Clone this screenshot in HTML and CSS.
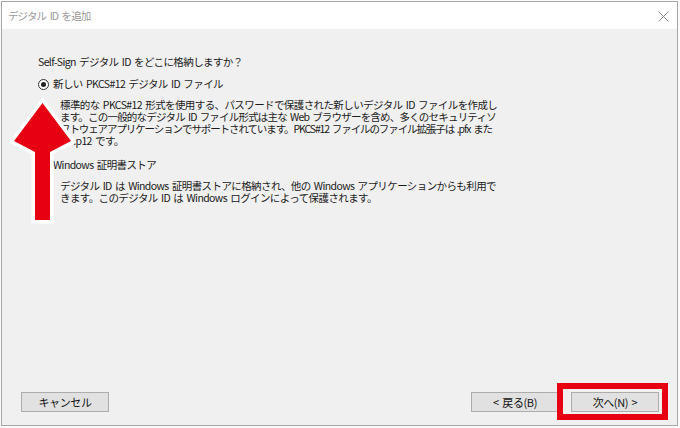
FILE: index.html
```html
<!DOCTYPE html>
<html lang="ja">
<head>
  <meta charset="UTF-8" />
  <title>デジタル ID を追加</title>
  <link rel="stylesheet" href="styles.css">
</head>
<body>

  <div class="dialog">
    <div class="titlebar">
      <span class="title">デジタル ID を追加</span>
      <span class="close">
        <svg width="11" height="11" viewBox="0 0 11 11">
          <path d="M0.5 0.5 L10.5 10.5 M10.5 0.5 L0.5 10.5" stroke="#8a8a8a" stroke-width="1" fill="none"/>
        </svg>
      </span>
    </div>

    <div class="content">
      <div class="question">Self-Sign デジタル ID をどこに格納しますか？</div>

      <label class="option">
        <span class="radio checked"></span>
        <span>新しい PKCS#12 デジタル ID ファイル</span>
      </label>
      <div class="desc">
        <div>標準的な PKCS#12 形式を使用する、パスワードで保護された新しいデジタル ID ファイルを作成し</div>
        <div class="kana">ます。この一般的なデジタル ID ファイル形式は主な Web ブラウザーを含め、多くのセキュリティソ</div>
        <div class="kana-more">フトウェアアプリケーションでサポートされています。PKCS#12 ファイルのファイル拡張子は .pfx また</div>
        <div>は .p12 です。</div>
      </div>

      <label class="option second">
        <span class="radio"></span>
        <span>Windows 証明書ストア</span>
      </label>
      <div class="desc">
        <div>デジタル ID は Windows 証明書ストアに格納され、他の Windows アプリケーションからも利用で</div>
        <div>きます。このデジタル ID は Windows ログインによって保護されます。</div>
      </div>
    </div>

    <div class="footer">
      <button class="btn">キャンセル</button>
      <div class="nav">
        <button class="btn">&lt; 戻る(B)</button>
        <button class="btn">次へ(N) &gt;</button>
      </div>
    </div>
  </div>

  <!-- annotations drawn over the dialog -->
  <svg class="arrow" width="90" height="140" viewBox="0 90 90 140">
    <polygon points="42.5,103 71,141 50,152 50,220 35,220 35,152 14,141"
             fill="#e60012" stroke="#ffffff" stroke-width="7"
             stroke-linejoin="miter" paint-order="stroke"/>
  </svg>
  <div class="highlight"></div>

</body>
</html>
```

FILE: styles.css
```css
:root {
  --face: #f0f0f0;
  --text: #1b1b1b;
  --btn-bg: #e1e1e1;
  --btn-border: #adadad;
  --mark: #e60012;
}

* {
  box-sizing: border-box;
}

body {
  margin: 0;
  width: 680px;
  height: 428px;
  background: #fbfbfb;
  font-family: "Noto Sans CJK JP", "Noto Sans", sans-serif;
  font-size: 10.5px;
  color: var(--text);
  position: relative;
  overflow: hidden;
}

.dialog {
  margin: 1px 0 0 1px;
  width: 677px;
  height: 425px;
  border: 1px solid #a6a6a6;
  background: var(--face);
  display: flex;
  flex-direction: column;
}

.titlebar {
  height: 27px;
  background: #fff;
  display: flex;
  align-items: center;
  justify-content: space-between;
  padding: 0 8px 0 6px;
}

.titlebar .title {
  color: #9a9a9a;
  font-size: 10.5px;
  letter-spacing: -0.9px;
  word-spacing: 2px;
}

.titlebar .close {
  display: flex;
  margin-top: 1px;
}

.content {
  flex: 1;
  padding: 27px 0 0 36px;
  line-height: 12px;
  letter-spacing: -0.6px;
  word-spacing: 1.5px;
  white-space: nowrap;
}

.question,
.desc div {
  height: 12px;
}

.desc .kana {
  letter-spacing: -0.8px;
}

.desc .kana-more {
  letter-spacing: -1.1px;
}

.option {
  display: flex;
  align-items: center;
  gap: 4px;
  margin-top: 10px;
  height: 12px;
}

.option.second {
  margin-top: 12px;
}

.radio {
  width: 11px;
  height: 11px;
  border: 1px solid #333;
  border-radius: 50%;
  background: #fff;
  display: flex;
  align-items: center;
  justify-content: center;
}

.radio.checked::after {
  content: "";
  width: 5px;
  height: 5px;
  border-radius: 50%;
  background: #222;
}

.desc {
  margin: 9px 0 0 22px;
}

.footer {
  display: flex;
  justify-content: space-between;
  padding: 0 18px 13px 19px;
}

.nav {
  display: flex;
  gap: 12px;
}

.btn {
  width: 88px;
  height: 20px;
  padding: 0;
  background: var(--btn-bg);
  border: 1px solid var(--btn-border);
  font-family: inherit;
  font-size: 11px;
  letter-spacing: -0.4px;
  word-spacing: 1.5px;
  color: #111;
}

.arrow {
  position: absolute;
  left: 0;
  top: 90px;
}

.highlight {
  position: absolute;
  left: 557px;
  top: 383px;
  width: 111px;
  height: 37px;
  border: 6px solid var(--mark);
}
```
